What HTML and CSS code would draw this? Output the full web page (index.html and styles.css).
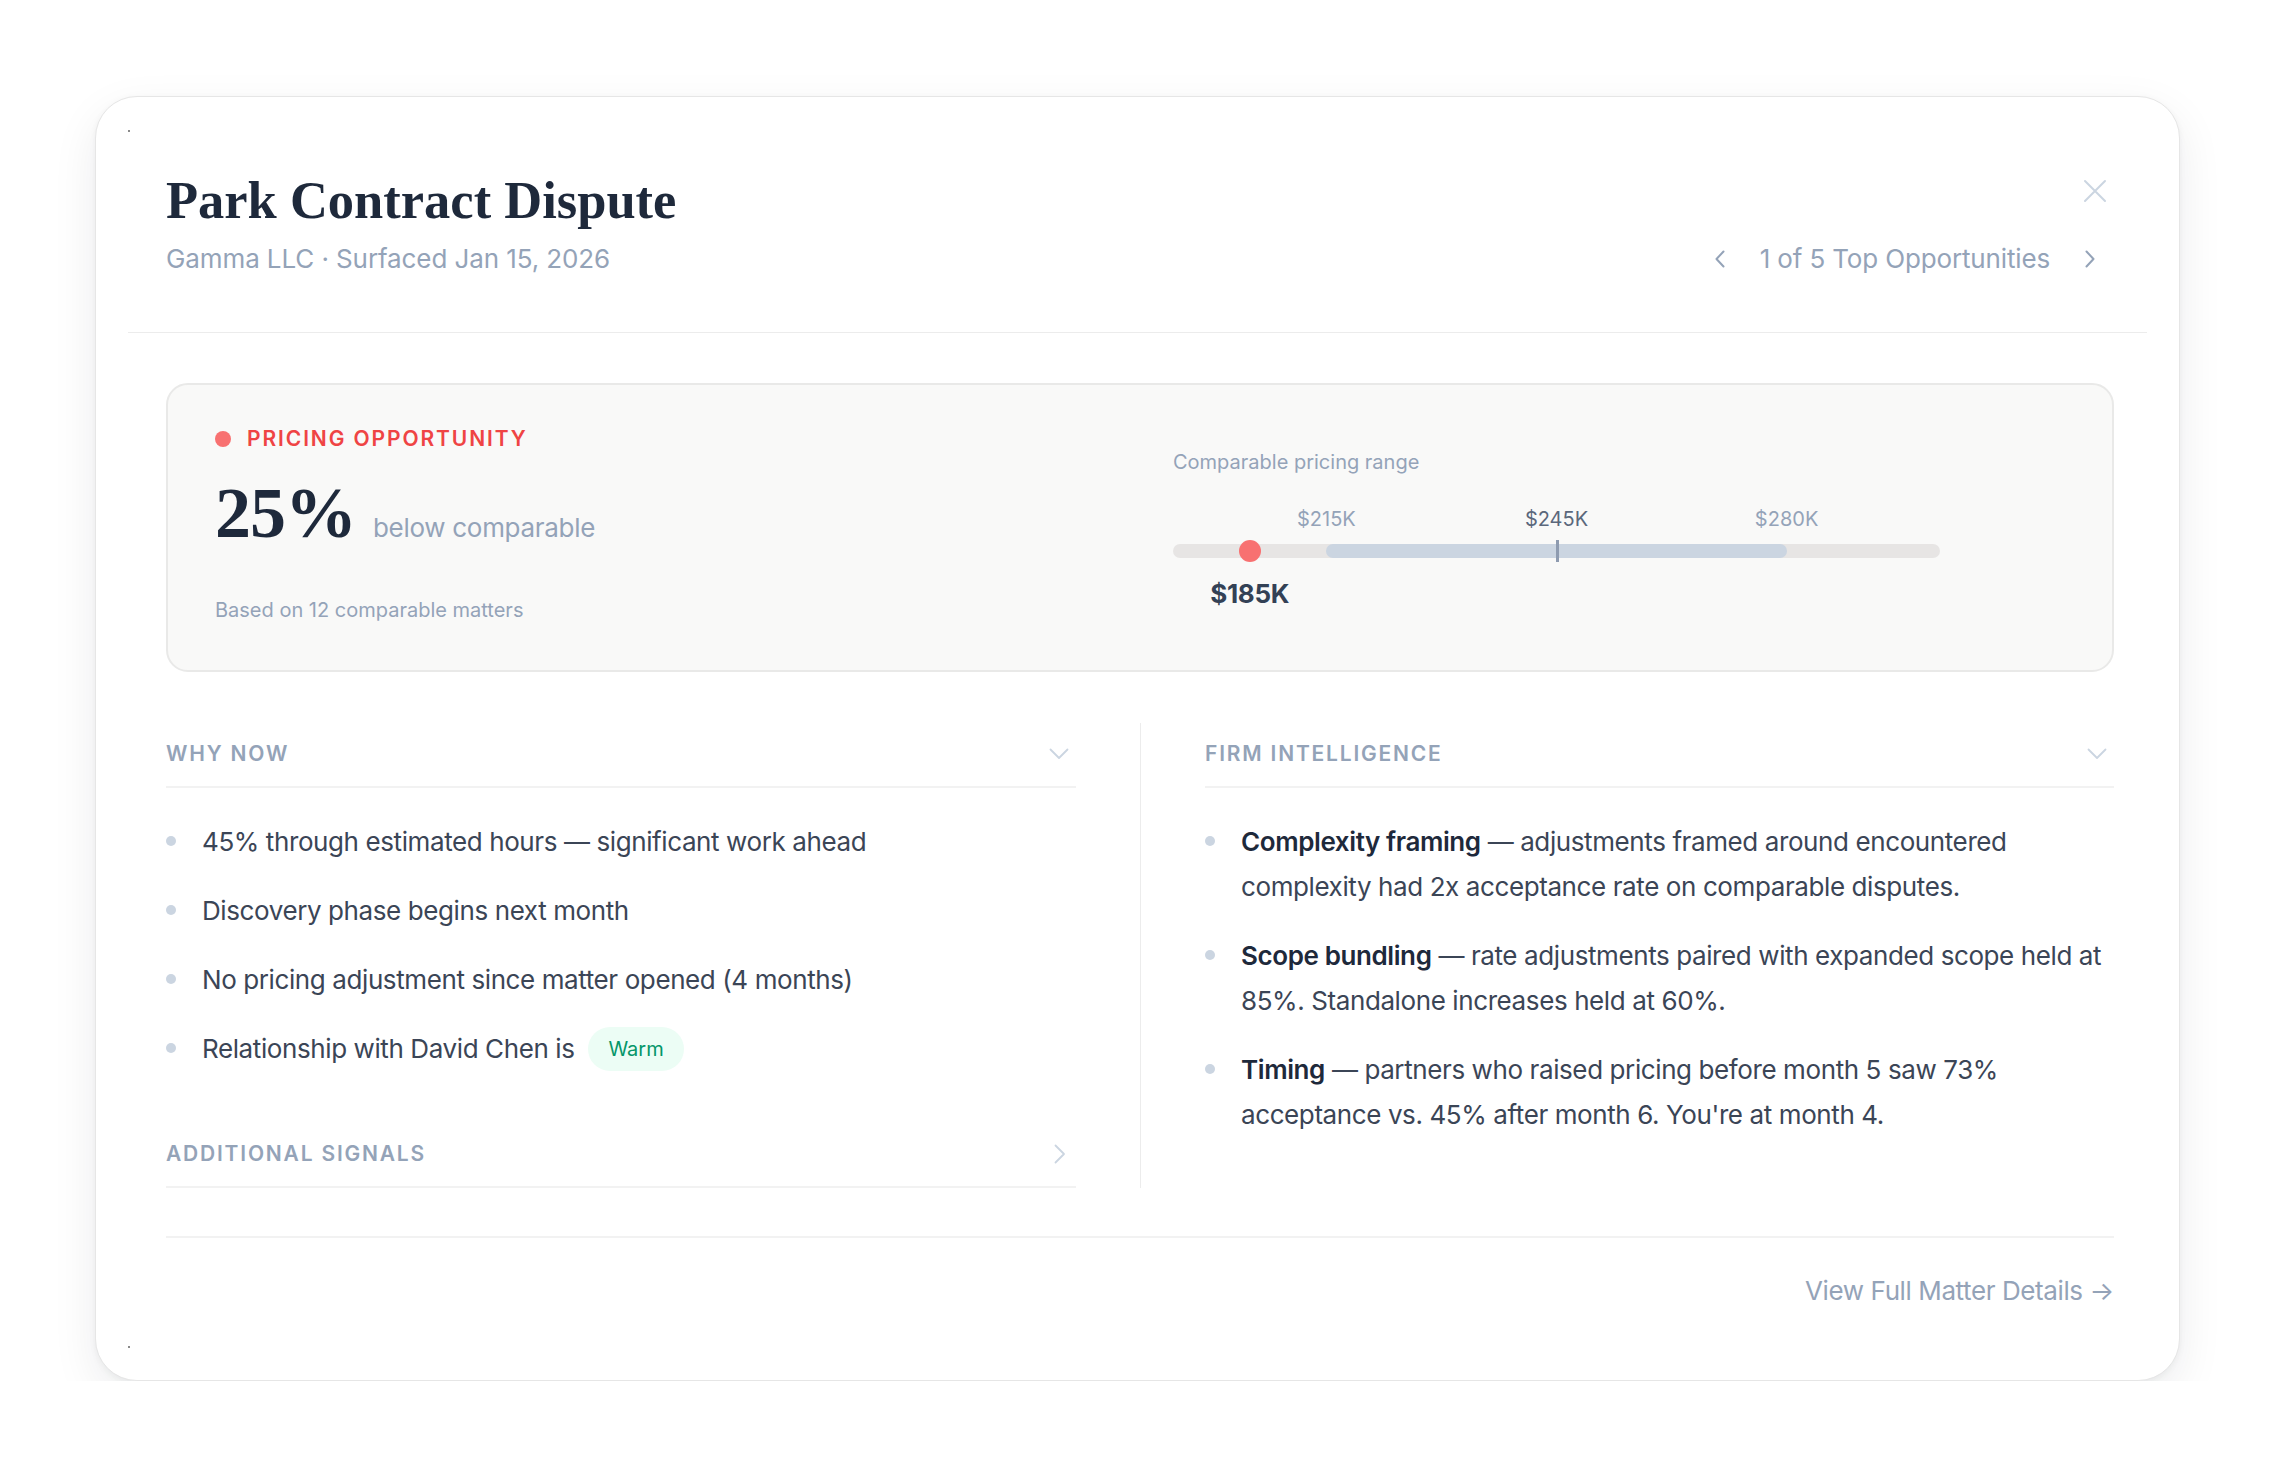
FILE: index.html
```html
<!DOCTYPE html>
<html lang="en">
<head>
<meta charset="utf-8">
<title>Park Contract Dispute</title>
<link rel="stylesheet" href="styles.css">
</head>
<body>
<div class="page">
  <div class="card">
    <div class="inner">
      <header class="head">
        <div class="head-left">
          <h1 class="title">Park Contract Dispute</h1>
          <p class="subtitle">Gamma LLC · Surfaced Jan 15, 2026</p>
        </div>
        <div class="head-right">
          <button class="close" aria-label="Close">
            <svg width="24" height="24" viewBox="0 0 24 24"><path d="M2 2 L22 22 M22 2 L2 22" fill="none" stroke="currentColor" stroke-width="2" stroke-linecap="round"/></svg>
          </button>
          <div class="pager">
            <button class="pager-btn" aria-label="Previous">
              <svg width="10" height="18" viewBox="0 0 10 18"><polyline points="8.5,1.5 1.5,9 8.5,16.5" fill="none" stroke="currentColor" stroke-width="2" stroke-linecap="round" stroke-linejoin="round"/></svg>
            </button>
            <span class="pager-text">1 of 5 Top Opportunities</span>
            <button class="pager-btn" aria-label="Next">
              <svg width="10" height="18" viewBox="0 0 10 18"><polyline points="1.5,1.5 8.5,9 1.5,16.5" fill="none" stroke="currentColor" stroke-width="2" stroke-linecap="round" stroke-linejoin="round"/></svg>
            </button>
          </div>
        </div>
      </header>

      <div class="body">
        <section class="pricing">
          <div class="pricing-left">
            <div class="tag"><span class="tag-dot"></span>PRICING OPPORTUNITY</div>
            <div class="stat"><span class="stat-num">25%</span><span class="stat-label">below comparable</span></div>
            <div class="stat-note">Based on 12 comparable matters</div>
          </div>
          <div class="pricing-right">
            <div class="range-title">Comparable pricing range</div>
            <div class="range">
              <div class="range-labels">
                <span class="range-label" style="left:20%">$215K</span>
                <span class="range-label mid" style="left:50%">$245K</span>
                <span class="range-label" style="left:80%">$280K</span>
              </div>
              <div class="track">
                <div class="fill" style="left:20%;width:60%"></div>
                <div class="median" style="left:50%"></div>
                <div class="marker" style="left:10%"></div>
              </div>
              <div class="range-value"><span class="value" style="left:10%">$185K</span></div>
            </div>
          </div>
        </section>

        <div class="columns">
          <div class="col col-left">
            <div class="sec-head">
              <span class="sec-title">WHY NOW</span>
              <svg class="chev-down" width="20" height="12" viewBox="0 0 20 12"><polyline points="1.5,1.5 10,10 18.5,1.5" fill="none" stroke="currentColor" stroke-width="1.8" stroke-linecap="round" stroke-linejoin="round"/></svg>
            </div>
            <ul class="list">
              <li><span class="dot"></span><span class="li-text">45% through estimated hours — significant work ahead</span></li>
              <li><span class="dot"></span><span class="li-text">Discovery phase begins next month</span></li>
              <li><span class="dot"></span><span class="li-text">No pricing adjustment since matter opened (4 months)</span></li>
              <li><span class="dot"></span><span class="li-text">Relationship with David Chen is <span class="badge">Warm</span></span></li>
            </ul>
            <div class="sec-head sec-more">
              <span class="sec-title">ADDITIONAL SIGNALS</span>
              <svg class="chev-right" width="12" height="20" viewBox="0 0 12 20"><polyline points="1.5,1.5 10,10 1.5,18.5" fill="none" stroke="currentColor" stroke-width="1.8" stroke-linecap="round" stroke-linejoin="round"/></svg>
            </div>
          </div>
          <div class="col col-right">
            <div class="sec-head">
              <span class="sec-title">FIRM INTELLIGENCE</span>
              <svg class="chev-down" width="20" height="12" viewBox="0 0 20 12"><polyline points="1.5,1.5 10,10 18.5,1.5" fill="none" stroke="currentColor" stroke-width="1.8" stroke-linecap="round" stroke-linejoin="round"/></svg>
            </div>
            <ul class="list">
              <li><span class="dot"></span><p class="li-text"><strong>Complexity framing</strong> — adjustments framed around encountered complexity had 2x acceptance rate on comparable disputes.</p></li>
              <li><span class="dot"></span><p class="li-text"><strong>Scope bundling</strong> — rate adjustments paired with expanded scope held at 85%. Standalone increases held at 60%.</p></li>
              <li><span class="dot"></span><p class="li-text"><strong>Timing</strong> — partners who raised pricing before month 5 saw 73% acceptance vs. 45% after month 6. You're at month 4.</p></li>
            </ul>
          </div>
        </div>

        <footer class="foot">
          <a class="foot-link" href="#">View Full Matter Details →</a>
        </footer>
      </div>
    </div>
  </div>
</div>
</body>
</html>
```

FILE: styles.css
```css
* { box-sizing: border-box; }

html, body {
  margin: 0;
  padding: 0;
  background: #ffffff;
}

body {
  font-family: Inter, "Noto Sans", "Liberation Sans", sans-serif;
  color: #384354;
}

.page {
  padding: 96px 0 0 95px;
}

.card {
  width: 2085px;
  background: #ffffff;
  border: 1px solid #e6e6e6;
  border-radius: 42px;
  padding: 32px;
  box-shadow: 0 16px 46px rgba(15, 23, 42, 0.08), 0 2px 6px rgba(15, 23, 42, 0.05);
}

.inner {
  position: relative;
  padding: 40px 0 39px;
}

.inner::before,
.inner::after {
  content: "";
  position: absolute;
  left: 0;
  width: 2px;
  height: 2px;
  background: #8a8a8a;
}
.inner::before { top: 1px; }
.inner::after { bottom: 0; }

/* Header */
.head {
  display: flex;
  justify-content: space-between;
  padding: 0 36px 55px 38px;
  border-bottom: 1px solid #ececec;
}

.title {
  margin: 0;
  font-family: "Liberation Serif", "Times New Roman", serif;
  font-weight: 700;
  font-size: 52.5px;
  line-height: 62px;
  color: #1e293b;
}

.subtitle {
  margin: 10px 0 0;
  font-size: 26px;
  line-height: 36px;
  letter-spacing: -0.1px;
  color: #94a3b8;
}

.head-right {
  display: flex;
  flex-direction: column;
  align-items: flex-end;
  justify-content: space-between;
}

.close {
  margin-top: 6px;
  width: 32px;
  height: 32px;
  padding: 0;
  border: 0;
  background: none;
  color: #cbd5e1;
  display: flex;
  align-items: center;
  justify-content: center;
}

.pager {
  display: flex;
  align-items: center;
  gap: 24px;
  height: 36px;
  margin-right: 5px;
}

.pager-btn {
  width: 32px;
  height: 32px;
  padding: 0;
  border: 0;
  background: none;
  color: #94a3b8;
  display: flex;
  align-items: center;
  justify-content: center;
}

.pager-text {
  font-size: 26px;
  line-height: 36px;
  letter-spacing: -0.15px;
  color: #94a3b8;
}

/* Body */
.body {
  padding: 50px 33px 0 38px;
}

.pricing {
  display: grid;
  grid-template-columns: 1fr 1fr;
  column-gap: 66px;
  align-items: center;
  background: #f9f9f8;
  border: 2px solid #e9e9e8;
  border-radius: 22px;
  padding: 39px 47px 46px;
}

.tag {
  display: flex;
  align-items: center;
  gap: 16px;
  font-size: 21px;
  line-height: 29px;
  font-weight: 600;
  letter-spacing: 1.9px;
  color: #ef4444;
}

.tag-dot {
  width: 16px;
  height: 16px;
  border-radius: 50%;
  background: #f87171;
}

.stat {
  display: flex;
  align-items: baseline;
  gap: 17px;
  margin-top: 24px;
}

.stat-num {
  font-family: "Liberation Serif", "Times New Roman", serif;
  font-weight: 700;
  font-size: 72px;
  line-height: 72px;
  letter-spacing: -1px;
  color: #1e293b;
}

.stat-label {
  font-size: 26px;
  letter-spacing: -0.3px;
  color: #94a3b8;
}

.stat-note {
  margin-top: 47px;
  font-size: 20px;
  line-height: 28px;
  color: #94a3b8;
}

.pricing-right {
  padding-top: 9px;
}

.range-title {
  font-size: 20px;
  line-height: 28px;
  color: #94a3b8;
}

.range {
  width: 767px;
  margin-top: 29px;
}

.range-labels {
  position: relative;
  height: 28px;
}

.range-label {
  position: absolute;
  top: 0;
  transform: translateX(-50%);
  font-size: 20px;
  line-height: 28px;
  color: #94a3b8;
  white-space: nowrap;
}

.range-label.mid {
  color: #5b687c;
  font-weight: 400;
}

.track {
  position: relative;
  margin-top: 11px;
  height: 14px;
  border-radius: 7px;
  background: #e7e5e4;
}

.fill {
  position: absolute;
  top: 0;
  bottom: 0;
  border-radius: 7px;
  background: #cbd5e1;
}

.median {
  position: absolute;
  top: -4px;
  width: 3px;
  height: 22px;
  margin-left: -1px;
  background: #8e9bb0;
}

.marker {
  position: absolute;
  top: -4px;
  width: 22px;
  height: 22px;
  margin-left: -11px;
  border-radius: 50%;
  background: #f87171;
}

.range-value {
  position: relative;
  margin-top: 20px;
  height: 31px;
}

.value {
  position: absolute;
  top: 0;
  transform: translateX(-50%);
  font-size: 26px;
  line-height: 31px;
  font-weight: 700;
  letter-spacing: -0.3px;
  color: #334155;
  white-space: nowrap;
}

/* Columns */
.columns {
  display: grid;
  grid-template-columns: 1fr 1fr;
  margin-top: 51px;
}

.col-left {
  padding-right: 64px;
}

.col-right {
  padding-left: 64px;
  border-left: 1px solid #ececec;
}

.sec-head {
  display: flex;
  align-items: center;
  justify-content: space-between;
  padding: 17px 0 18px;
  border-bottom: 2px solid #f2f2f2;
}

.sec-title {
  font-size: 21px;
  line-height: 28px;
  font-weight: 600;
  letter-spacing: 1.8px;
  color: #94a3b8;
}

.chev-down {
  color: #cbd5e1;
  margin-right: 7px;
}

.chev-right {
  color: #cbd5e1;
  margin-right: 10px;
}

.sec-more {
  margin-top: 50px;
}

.list {
  list-style: none;
  margin: 31px 0 0;
  padding: 0;
  display: flex;
  flex-direction: column;
  gap: 24px;
}

.list li {
  display: flex;
  align-items: flex-start;
}

.dot {
  flex: none;
  width: 10px;
  height: 10px;
  margin-top: 17px;
  margin-right: 26px;
  border-radius: 50%;
  background: #cbd5e1;
}

.li-text {
  margin: 0;
  font-size: 26px;
  line-height: 45px;
  letter-spacing: -0.4px;
  color: #3b4556;
}

.li-text strong {
  font-weight: 600;
  color: #1e293b;
}

.badge {
  display: inline-block;
  vertical-align: middle;
  margin-left: 7px;
  height: 44px;
  padding: 0 20px;
  border-radius: 22px;
  background: #ecfdf5;
  color: #059669;
  font-size: 20px;
  line-height: 44px;
  letter-spacing: 0;
  position: relative;
  top: -2px;
}

/* Footer */
.foot {
  margin-top: 48px;
  border-top: 2px solid #f2f2f2;
  padding-top: 35px;
  text-align: right;
}

.foot-link {
  font-size: 26px;
  line-height: 36px;
  letter-spacing: -0.4px;
  color: #94a3b8;
  text-decoration: none;
}
```
